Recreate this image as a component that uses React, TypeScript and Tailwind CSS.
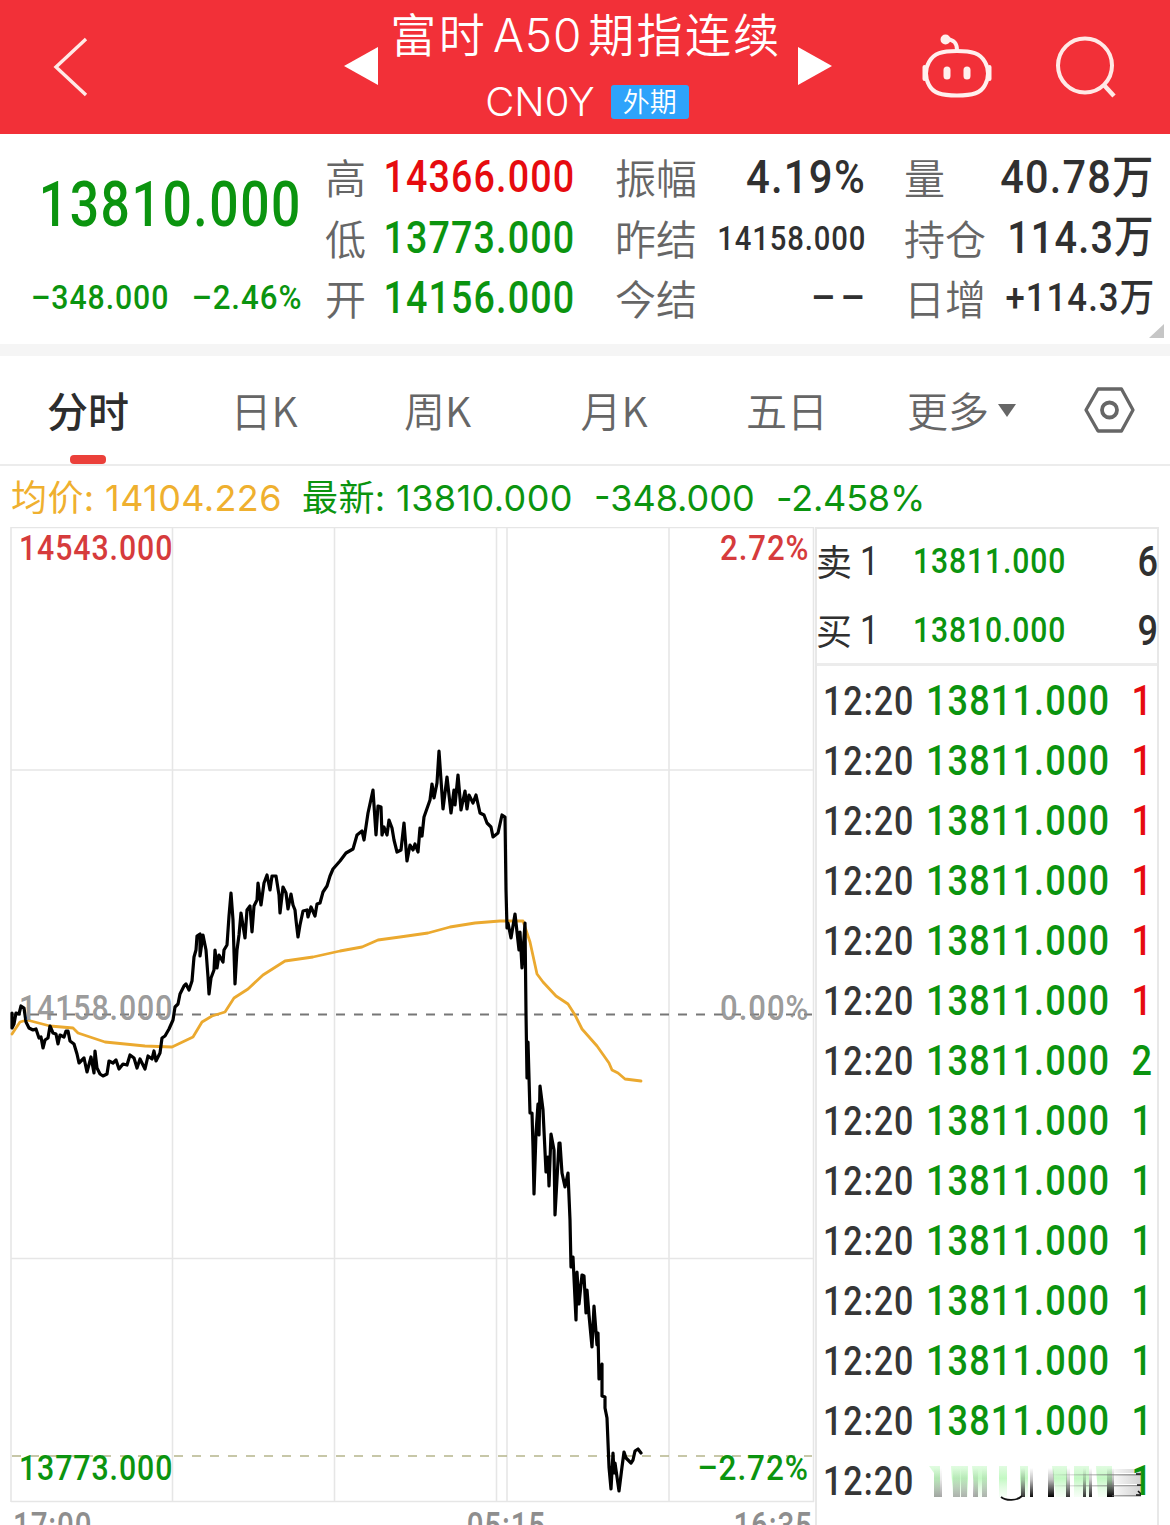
import type { ReactNode } from 'react';
import clsx from 'clsx';

const pricePoints =
  '12,1013 12,1028 14,1024 16,1013 19,1014 21,1006 24,1008 26,1022 29,1028 33,1030 36,1029 39,1038 41,1037 43,1048 45,1040 48,1038 50,1026 53,1033 56,1034 58,1044 60,1035 64,1037 66,1031 68,1031 70,1041 74,1044 77,1054 79,1063 82,1060 84,1058 87,1072 91,1057 94,1073 95,1051 97,1068 100,1074 103,1076 107,1074 109,1061 113,1063 116,1060 119,1069 123,1064 127,1065 130,1055 134,1058 137,1068 140,1059 145,1069 148,1056 152,1059 154,1051 156,1061 160,1053 162,1038 165,1036 169,1029 173,1020 175,1007 178,1004 180,994 184,986 186,984 189,990 192,981 194,957 196,950 197,936 200,934 200,956 203,935 206,950 208,977 209,994 211,978 214,970 215,950 217,968 219,955 223,962 224,950 227,945 229,916 231,893 233,920 235,984 237,950 239,935 241,913 245,938 247,910 250,906 252,932 254,906 257,900 258,883 261,905 264,883 267,875 270,890 272,876 276,876 279,895 280,913 283,887 286,893 288,909 291,894 293,905 295,910 296,920 298,937 300,925 303,911 307,910 308,917 311,907 315,916 317,904 320,903 323,892 327,886 330,876 333,869 340,861 346,853 353,849 357,835 362,831 364,840 368,813 373,790 376,835 378,806 381,807 382,835 384,827 387,835 389,820 392,828 394,840 397,852 401,850 404,823 407,861 410,845 413,850 415,844 418,852 420,828 422,836 424,817 430,800 432,784 434,798 437,783 439,751 443,809 447,777 451,813 454,790 455,805 458,775 461,810 465,791 467,809 469,795 473,803 476,795 480,813 484,815 487,823 491,827 493,837 498,833 502,815 505,817 506,890 507,928 508,923 511,938 515,914 519,950 520,932 522,968 525,923 526,1013 527,1078 528,1042 530,1113 532,1113 533,1147 534,1194 536,1133 538,1104 539,1135 540,1086 543,1110 546,1172 548,1157 549,1186 551,1134 554,1150 555,1215 559,1143 560,1143 562,1173 565,1187 568,1173 570,1220 571,1267 573,1257 576,1320 577,1272 579,1304 582,1275 584,1276 586,1313 587,1290 589,1315 592,1347 594,1306 597,1345 598,1333 599,1379 602,1364 602,1396 605,1397 605,1408 607,1418 609,1467 611,1489 613,1453 614,1473 615,1463 619,1491 622,1467 624,1452 626,1458 631,1463 633,1460 635,1451 638,1449 641,1453';

const averagePoints =
  '12,1034 20,1022 27,1020 50,1026 73,1028 78,1033 105,1042 145,1046 172,1047 193,1037 202,1022 212,1016 225,1012 234,998 248,989 263,975 285,961 313,957 340,951 362,947 378,940 400,937 428,933 450,927 475,923 500,921 523,921 530,942 537,974 543,982 556,996 568,1004 575,1015 582,1029 597,1046 609,1063 612,1070 618,1073 625,1079 641,1081';

const tabs = [
  { label: '日K', className: 'w-[176px]' },
  { label: '周K', className: 'w-[171px]' },
  { label: '月K', className: 'w-[182px]' },
  { label: '五日', className: 'w-[164px]' },
];

const trades = [
  { qty: 1, up: true },
  { qty: 1, up: true },
  { qty: 1, up: true },
  { qty: 1, up: true },
  { qty: 1, up: true },
  { qty: 1, up: true },
  { qty: 2, up: false },
  { qty: 1, up: false },
  { qty: 1, up: false },
  { qty: 1, up: false },
  { qty: 1, up: false },
  { qty: 1, up: false },
  { qty: 1, up: false },
];

function Num({ className, children }: { className?: string; children: ReactNode }) {
  return (
    <span
      className={clsx(
        'inline-block shrink-0 whitespace-nowrap leading-none font-medium tracking-[0.03em] font-[Roboto,"Noto_Sans_CJK_SC",sans-serif]',
        className
      )}
    >
      {children}
    </span>
  );
}

function Quote({ label, children }: { label: string; children: ReactNode }) {
  return (
    <div className="flex h-[60.5px] items-center justify-between">
      <span className="mb-px -ml-px shrink-0 text-[41px] leading-none font-[350] text-[#666]">{label}</span>
      <div className="flex w-0 justify-end">{children}</div>
    </div>
  );
}

function Header() {
  return (
    <header className="flex h-[134px] bg-[#f23038] text-white">
      <div className="w-[344px] pt-[37px] pl-[53px]">
        <svg width="36" height="60" viewBox="0 0 36 60" fill="none" stroke="#ffe9e6" strokeWidth="3.4">
          <path d="M33 2 3 30 33 58" />
        </svg>
      </div>
      <div className="flex w-[488px] justify-between">
        <svg className="mt-[47px]" width="34" height="38" viewBox="0 0 34 38" fill="#fff">
          <path d="M34 0v38L0 19z" />
        </svg>
        <div className="flex flex-col items-center">
          <div className="mt-[7px] mr-[4px] flex h-[50px] items-center text-[46px] leading-none font-[350] tracking-[2.4px]">
            <span>富时</span>
            <span className="mt-[5px] mr-[6px] ml-[6px] font-[Inter] text-[46px] font-[350] tracking-[0.8px]">A50</span>
            <span>期指连续</span>
          </div>
          <div className="mt-[23px] mr-[2px] flex h-[44px] items-center">
            <span className="font-[Inter] text-[40px] leading-none font-[350]">CN0Y</span>
            <span className="ml-[16px] flex h-[34px] w-[78px] items-center justify-center rounded-[3px] bg-[#2ea3fb] pb-[3px] text-[27px] leading-none font-[350]">
              外期
            </span>
          </div>
        </div>
        <svg className="mt-[47px]" width="34" height="38" viewBox="0 0 34 38" fill="#fff">
          <path d="M0 0v38l34-19z" />
        </svg>
      </div>
      <div className="flex pt-[34px] pl-[89px]">
        <svg width="72" height="66" viewBox="0 0 72 66" fill="none" stroke="#fff0ee" strokeWidth="4">
          <path d="M36 17C51 17 59 19 64 28c4 7 4 16 0 23-4 8-12 10.500-28 10.500S12 59 8 51c-4-7-4-16 0-23 5-9 13-11 28-11z" />
          <path d="M36 16c0-7-3-10-10-11" />
          <circle cx="24.500" cy="5.500" r="3" fill="#fff0ee" />
          <path d="M3.500 33v12M68.500 33v12" strokeWidth="4" strokeLinecap="round" />
          <path d="M26 36v6M46 36v6" strokeWidth="7" strokeLinecap="round" />
        </svg>
        <svg className="mt-[2px] ml-[62px]" width="62" height="62" viewBox="0 0 62 62" fill="none" stroke="#ffe9e6" strokeWidth="4">
          <circle cx="30" cy="29.500" r="27" />
          <path d="M48 48 59 60" strokeWidth="4.500" />
        </svg>
      </div>
    </header>
  );
}

function QuotePanel() {
  return (
    <section className="relative flex h-[210px] pt-[13px]">
      <div className="w-[302px] text-[#0b940f]">
        <div className="flex h-[114px] items-center justify-end">
          <Num className="origin-right scale-x-[0.82] text-[63px]">13810.000</Num>
        </div>
        <div className="flex h-[71px] items-center justify-between pl-[31px]">
          <Num className="origin-left scale-x-[0.89] text-[34px]">–348.000</Num>
          <div className="flex w-0 justify-end">
            <Num className="origin-right scale-x-[0.92] text-[34px]">–2.46%</Num>
          </div>
        </div>
      </div>
      <div className="ml-[24px] w-[249px]">
        <Quote label="高">
          <Num className="origin-right scale-x-[0.855] text-[44px] text-[#e60b0f]">14366.000</Num>
        </Quote>
        <Quote label="低">
          <Num className="origin-right scale-x-[0.855] text-[44px] text-[#0b940f]">13773.000</Num>
        </Quote>
        <Quote label="开">
          <Num className="origin-right scale-x-[0.855] text-[44px] text-[#0b940f]">14156.000</Num>
        </Quote>
      </div>
      <div className="ml-[41px] w-[250px] text-[#303030]">
        <Quote label="振幅">
          <Num className="origin-right scale-x-[0.91] text-[46px]">4.19%</Num>
        </Quote>
        <Quote label="昨结">
          <Num className="origin-right scale-x-[0.86] text-[34px]">14158.000</Num>
        </Quote>
        <Quote label="今结">
          <Num className="text-[38px]">
            <span className="mr-[4px]">–</span>–
          </Num>
        </Quote>
      </div>
      <div className="ml-[39px] w-[250px] text-[#303030]">
        <Quote label="量">
          <Num className="origin-right scale-x-[0.9] text-[46px]">40.78万</Num>
        </Quote>
        <Quote label="持仓">
          <Num className="origin-right scale-x-[0.88] text-[45px]">114.3万</Num>
        </Quote>
        <Quote label="日增">
          <Num className="origin-right scale-x-[0.89] text-[39px]">+114.3万</Num>
        </Quote>
      </div>
      <svg className="absolute right-[6px] bottom-[6px]" width="15" height="14" viewBox="0 0 15 14" fill="#c6c6c6">
        <path d="M15 0v14H0z" />
      </svg>
    </section>
  );
}

function Tabs() {
  return (
    <nav className="flex h-[122px] border-t-[12px] border-[#f5f5f5] text-[41px] leading-none font-[350] text-[#666]">
      <div className="flex w-[176px] flex-col items-center border-b-2 border-[#ececec]">
        <span className="mt-[33px] h-[41px] font-medium text-[#2d2d2d]">分时</span>
        <span className="mt-[25px] h-[9px] w-[36px] shrink-0 rounded-[4px] bg-[#eb403a]" />
      </div>
      {tabs.map((tab) => (
        <span key={tab.label} className={clsx('border-b-2 border-[#ececec] pt-[33px] text-center', tab.className)}>
          {tab.label}
        </span>
      ))}
      <div className="flex flex-1 border-b-2 border-[#ececec] pl-[38px]">
        <span className="pt-[33px]">更多</span>
        <svg className="mt-[48px] ml-[9px]" width="18" height="13" viewBox="0 0 18 13" fill="#666">
          <path d="M0 0h18L9 13z" />
        </svg>
        <svg className="mt-[31px] ml-[68px]" width="51" height="46" viewBox="0 0 51 46" fill="none" stroke="#666" strokeWidth="3.300" strokeLinejoin="round">
          <path d="M14 2h23.500L49 23 37.500 44H14L2 23z" />
          <circle cx="25.500" cy="23" r="7.500" strokeWidth="3.800" />
        </svg>
      </div>
    </nav>
  );
}

function Summary() {
  return (
    <div className="flex h-[61px] items-center pt-[2px] pl-[11px] font-[Inter,'Noto_Sans_CJK_SC',sans-serif] text-[36px] leading-none tracking-[0.4px] whitespace-pre text-[#0b940f]">
      <span className="w-[291px] text-[#efb02f]">均价: 14104.226</span>
      <span className="w-[292px]">最新: 13810.000</span>
      <span className="w-[182px] tracking-[0px]">-348.000</span>
      <span className="tracking-[-0.2px]">-2.458%</span>
    </div>
  );
}

function Chart() {
  return (
    <div className="relative w-[815px] shrink-0">
      <svg width="815" height="998" viewBox="0 527 815 998" fill="none" className="block">
        <g stroke="#e6e6e6" strokeWidth="1.600">
          <path d="M11 527.500H814M11 770H814M11 1258.500H814M11 1501.500H814" />
          <path d="M11 527V1502M172.500 527V1502M334.500 527V1502M496.500 527V1502M507 527V1502M669 527V1502M813.500 527V1502" />
        </g>
        <path d="M12 1014.500H812" stroke="#777" strokeWidth="1.800" strokeDasharray="9 9" />
        <path d="M12 1456H812" stroke="#b5b58c" strokeWidth="1.600" strokeDasharray="9 9" />
        <polyline points={averagePoints} stroke="#eba92f" strokeWidth="2.800" strokeLinejoin="round" strokeLinecap="round" />
        <polyline points={pricePoints} stroke="#000" strokeWidth="3.200" strokeLinejoin="round" strokeLinecap="round" />
      </svg>
      <div className="absolute top-[4px] right-[6px] left-[19px] flex justify-between text-[#d63b3c]">
        <Num className="origin-left scale-x-[0.865] text-[35px]">14543.000</Num>
        <Num className="origin-right scale-x-[0.89] text-[35px]">2.72%</Num>
      </div>
      <div className="absolute top-[464px] right-[6px] left-[19px] flex justify-between text-[#8e8e8e]/90">
        <Num className="origin-left scale-x-[0.865] text-[35px]">14158.000</Num>
        <Num className="origin-right scale-x-[0.89] text-[35px]">0.00%</Num>
      </div>
      <div className="absolute top-[924px] right-[6px] left-[19px] flex justify-between text-[#0b940f]">
        <Num className="origin-left scale-x-[0.865] text-[35px]">13773.000</Num>
        <Num className="origin-right scale-x-[0.9] text-[35px]">–2.72%</Num>
      </div>
      <div className="absolute top-[981px] right-[2px] left-[13px] flex h-[17px] justify-between overflow-hidden text-[#8e8e8e]">
        <Num className="origin-left scale-x-[0.82] text-[36px]">17:00</Num>
        <Num className="ml-[186px] scale-x-[0.82] text-[36px]">05:15</Num>
        <Num className="origin-right scale-x-[0.82] text-[36px]">16:35</Num>
      </div>
    </div>
  );
}

function OrderRow({ side, price, qty }: { side: string; price: string; qty: number }) {
  return (
    <div className="flex h-[69px] items-center pb-[4px]">
      <span className="mb-[4px] -ml-px w-[44px] text-[36px] leading-none text-[#303030]">{side}</span>
      <span className="w-[53px] origin-left scale-x-[0.82] font-[Roboto] text-[41px] leading-none text-[#303030]">1</span>
      <Num className="origin-left scale-x-[0.86] text-[35px] text-[#0b940f]">{price}</Num>
      <Num className="-mr-[2px] ml-auto origin-right scale-x-[0.86] text-[42px] text-[#303030]">{qty}</Num>
    </div>
  );
}

// vertical streaks left behind by the price while it is being repainted
const streaks = [
  { x: 7, w: 8, dark: 0.35 },
  { x: 26, w: 7, dark: 0.3 },
  { x: 34, w: 6, dark: 0.3 },
  { x: 46, w: 5, dark: 0.35 },
  { x: 55, w: 5, dark: 0.3 },
  { x: 94, w: 4, dark: 0.8 },
  { x: 103, w: 3, dark: 0.95 },
  { x: 121, w: 6, dark: 1 },
  { x: 139, w: 4, dark: 0.8 },
  { x: 156, w: 3, dark: 0.8 },
  { x: 162, w: 3, dark: 0.85 },
  { x: 180, w: 7, dark: 1 },
];

function SmearedPrice() {
  return (
    <svg width="228" height="44" viewBox="0 0 228 44" fill="none">
      <defs>
        <linearGradient id="streak" x2="0" y2="1">
          <stop offset="0" stopColor="#000" stopOpacity="0" />
          <stop offset="0.4" stopColor="#000" stopOpacity="0.25" />
          <stop offset="1" stopColor="#000" />
        </linearGradient>
        <linearGradient id="fade" x2="0" y2="1">
          <stop offset="0" stopColor="#b4f7b4" stopOpacity="0.4" />
          <stop offset="0.4" stopColor="#b4f7b4" stopOpacity="0.8" />
          <stop offset="1" stopColor="#d4fad4" stopOpacity="0.2" />
        </linearGradient>
        <linearGradient id="trail" x2="1" y2="0">
          <stop offset="0" stopColor="#666" stopOpacity="0" />
          <stop offset="1" stopColor="#777" stopOpacity="0.8" />
        </linearGradient>
      </defs>
      <path
        d="M2 6h11v31H7V13zM24 6h17v31H26zM45 6h15v31H48zM72 6h8v31h-8zM93 6h8v31h-8zM125 6h15v31h-11zM147 6h15v31h-15zM169 6h16v31h-14z"
        fill="url(#fade)"
      />
      {streaks.map((s) => (
        <rect key={s.x} x={s.x} y="8" width={s.w} height="29" fill="url(#streak)" opacity={s.dark} />
      ))}
      <path d="M74 37c5 4 16 4 21-1" stroke="#111" strokeWidth="1.800" />
      <path d="M182 9h32v4h-32zM182 15h32v9h-32zM182 27h32v9h-32z" fill="url(#trail)" opacity="0.4" />
      <path d="M120 14h94v1.500h-94zM120 25h94v1.500h-94zM185 35h29v1.500h-29z" fill="url(#trail)" />
      <path d="M209 14h5M210 25h5M209 35h5M211 31l3 3" stroke="#111" strokeWidth="1.600" />
    </svg>
  );
}

function TradePanel() {
  return (
    <div className="h-[998px] w-[344px] border-x-2 border-t-2 border-[#e8e8e8]">
      <div className="h-[137px] border-b-[3px] border-[#ececec]">
        <OrderRow side="卖" price="13811.000" qty={6} />
        <OrderRow side="买" price="13810.000" qty={9} />
      </div>
      <div className="pt-[5px] pr-[4px] pl-[6px]">
        {trades.map((trade, i) => (
          <div key={i} className="flex h-[60px] items-center">
            <Num className="w-[103px] origin-left scale-x-[0.83] text-[41px] text-[#363636]">12:20</Num>
            <Num className="origin-left scale-x-[0.86] text-[42px] text-[#0b940f]">13811.000</Num>
            <Num
              className={clsx(
                '-ml-[20px] flex-1 origin-right scale-x-[0.86] text-right text-[42px]',
                trade.up ? 'text-[#e60b0f]' : 'text-[#0b940f]'
              )}
            >
              {trade.qty}
            </Num>
          </div>
        ))}
        <div className="relative flex h-[60px] items-center">
          <Num className="w-[103px] origin-left scale-x-[0.83] text-[41px] text-[#363636]">12:20</Num>
          <div className="absolute top-[9px] left-[104px]">
            <SmearedPrice />
          </div>
          <Num className="relative ml-auto origin-right scale-x-[0.86] text-[42px] text-[#0b940f]">1</Num>
        </div>
      </div>
    </div>
  );
}

export default function App() {
  return (
    <div className="h-[1525px] w-[1170px] overflow-hidden bg-white font-['Noto_Sans_CJK_SC',sans-serif]">
      <Header />
      <QuotePanel />
      <Tabs />
      <Summary />
      <main className="flex">
        <Chart />
        <TradePanel />
      </main>
    </div>
  );
}
